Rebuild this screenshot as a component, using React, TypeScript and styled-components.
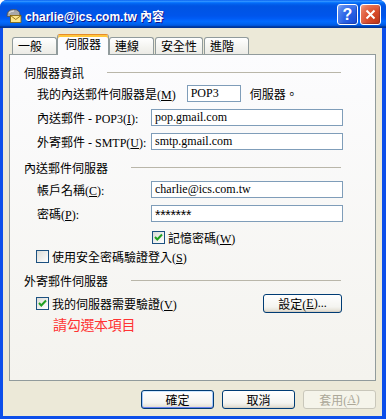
import React from 'react';
import styled, { createGlobalStyle } from 'styled-components';

const GlobalStyle = createGlobalStyle`
  html, body {
    margin: 0;
    padding: 0;
    background: #fff;
  }
  body {
    font-family: "Liberation Serif", "Noto Sans CJK TC", serif;
    font-size: 12px;
    color: #000;
  }
  * {
    box-sizing: border-box;
  }
`;

const Window = styled.div`
  width: 386px;
  height: 419px;
  display: flex;
  flex-direction: column;
  border-radius: 7px 7px 0 0;
  overflow: hidden;
  background: #0c4eea;
`;

const TitleBar = styled.div`
  height: 28px;
  flex: none;
  display: flex;
  align-items: center;
  padding: 1px 5px 0 6px;
  background: linear-gradient(
    to bottom,
    #0058ee 0%,
    #3593ff 4%,
    #288eff 6%,
    #127dff 8%,
    #036ffc 10%,
    #0262ee 14%,
    #0057e5 20%,
    #0054e3 24%,
    #0055eb 56%,
    #005bf5 66%,
    #026afe 76%,
    #0062ef 86%,
    #0052d6 92%,
    #0040ab 94%,
    #003092 100%
  );
`;

const TitleText = styled.div`
  flex: 1;
  margin-left: 3px;
  padding-top: 2px;
  font-family: "Liberation Sans", "Noto Sans CJK TC", sans-serif;
  font-weight: bold;
  font-size: 12px;
  color: #fff;
  text-shadow: 1px 1px #0f1089;
  white-space: nowrap;
`;

const CaptionButton = styled.div<{ $kind: 'help' | 'close' }>`
  width: 21px;
  height: 21px;
  margin-left: 2px;
  border: 1px solid #fff;
  border-radius: 3px;
  display: flex;
  align-items: center;
  justify-content: center;
  color: #fff;
  font-family: "Liberation Sans", sans-serif;
  font-weight: bold;
  font-size: 16px;
  background: ${(p) =>
    p.$kind === 'help'
      ? 'radial-gradient(circle at 85% 85%, #1b4fd8 0%, #2a62e6 45%, #5585ee 80%, #8fb0f4 100%)'
      : 'radial-gradient(circle at 85% 85%, #c23a1c 0%, #db4c2c 45%, #e8785a 80%, #f3a88f 100%)'};
  box-shadow: inset -1px -1px 1px rgba(0, 0, 60, 0.25);
`;

const Body = styled.div`
  flex: 1;
  margin: 0 4px 3px 3px;
  padding: 6px 6px 7px 6px;
  background: #ece9d8;
  display: flex;
  flex-direction: column;
`;

const TabStrip = styled.div`
  height: 21px;
  margin-bottom: -1px;
  padding-left: 3px;
  display: flex;
  align-items: flex-end;
  position: relative;
  z-index: 1;
`;

const Tab = styled.div<{ $active?: boolean }>`
  font-family: "Noto Sans CJK TC", sans-serif;
  font-size: 12px;
  line-height: 14px;
  display: flex;
  align-items: center;
  border: 1px solid #919b9c;
  border-bottom: none;
  border-radius: 3px 3px 0 0;
  white-space: nowrap;
  ${(p) =>
    p.$active
      ? `
    height: 21px;
    margin: 0 0 0 -1px;
    padding: 0 7px 2px 7px;
    background: #fcfcfe;
    border-top: 1px solid #e68b2c;
    box-shadow: inset 0 2px #ffc73c;
    position: relative;
  `
      : `
    height: 17px;
    min-width: 45px;
    margin: 0 1px 1px 0;
    padding: 0 5px;
    background: linear-gradient(#ffffff, #f3f3ef 60%, #ecebe6);
  `}
`;

const Panel = styled.div`
  flex: 1;
  border: 1px solid #919b9c;
  background: linear-gradient(#fcfcfe, #f4f3ee);
  padding: 10px 0 0 14px;
  display: flex;
  flex-direction: column;
`;

const GroupHeader = styled.div<{ $gap?: number }>`
  height: 14px;
  margin: ${(p) => p.$gap ?? 0}px 34px 0 0;
  display: flex;
  align-items: center;
  gap: 23px;
  font-family: "Noto Sans CJK TC", sans-serif;
  white-space: nowrap;
  &::after {
    content: '';
    flex: 1;
    border-top: 1px solid #b9b6a9;
  }
`;

const FieldRow = styled.div<{ $gap: number }>`
  height: 17px;
  margin-top: ${(p) => p.$gap}px;
  padding-left: 13px;
  display: flex;
  align-items: center;
  white-space: nowrap;
`;

const Label = styled.span<{ $width?: number }>`
  ${(p) => (p.$width ? `width: ${p.$width}px;` : '')}
  flex: none;
`;

const Mn = styled.span`
  text-decoration: underline;
`;

const Input = styled.div<{ $width: number; $secret?: boolean }>`
  width: ${(p) => p.$width}px;
  height: 17px;
  border: 1px solid #7f9db9;
  background: #fff;
  padding: 0 3px;
  display: flex;
  align-items: center;
  ${(p) =>
    p.$secret
      ? 'font-family: "Liberation Sans", sans-serif; font-size: 14px; letter-spacing: -0.3px; padding-top: 3px;'
      : ''}
`;

const Suffix = styled.span`
  margin-left: 9px;
  font-family: "Noto Sans CJK TC", sans-serif;
`;

const CheckRow = styled.div<{ $gap: number; $indent: number; $tall?: boolean }>`
  height: ${(p) => (p.$tall ? 19 : 13)}px;
  margin: ${(p) => p.$gap}px 33px 0 0;
  padding-left: ${(p) => p.$indent}px;
  display: flex;
  align-items: center;
  justify-content: space-between;
`;

const CheckLabel = styled.label`
  display: flex;
  align-items: center;
  gap: 3px;
  white-space: nowrap;
`;

const Box = styled.span`
  width: 13px;
  height: 13px;
  flex: none;
  border: 1px solid #1c5180;
  background: linear-gradient(135deg, #dcdcd7, #ffffff);
  display: flex;
  align-items: center;
  justify-content: center;
`;

const Hint = styled.div`
  margin-top: 3px;
  padding-left: 29px;
  font-family: "Noto Sans CJK TC", sans-serif;
  font-size: 14px;
  line-height: 16px;
  letter-spacing: -0.3px;
  color: #ff3333;
`;

const Button = styled.button<{ $width: number; $default?: boolean }>`
  width: ${(p) => p.$width}px;
  height: 19px;
  padding: 0;
  border: 1px solid #003c74;
  border-radius: 3px;
  background: linear-gradient(#ffffff, #f4f4f0 70%, #e6e3d9 90%, #d6d0c5);
  font-family: "Liberation Serif", "Noto Sans CJK TC", serif;
  font-size: 12px;
  color: #000;
  display: flex;
  align-items: center;
  justify-content: center;
  ${(p) =>
    p.$default
      ? 'box-shadow: inset 0 1px #cee7ff, inset 0 -1px #6982ee, inset 1px 0 #a2c6fb, inset -1px 0 #a2c6fb;'
      : 'box-shadow: inset 0 -1px #d6d0c5;'}
  &:disabled {
    border-color: #c9c7ba;
    background: #f5f4ea;
    color: #aca899;
    box-shadow: none;
  }
`;

const ButtonRow = styled.div`
  margin-top: 9px;
  display: flex;
  justify-content: flex-end;
  gap: 8px;
`;

const Check: React.FC<{ checked?: boolean }> = ({ checked }) => (
  <Box>
    {checked && (
      <svg width="9" height="9" viewBox="0 0 9 9">
        <path d="M1 4 L3.3 6.5 L8 1.5" fill="none" stroke="#21a121" strokeWidth="2" />
      </svg>
    )}
  </Box>
);

const MailIcon = () => (
  <svg width="16" height="16" viewBox="0 0 16 16">
    <path d="M1 9 Q1 2.5 7.5 2.5 Q14 2.5 14 8 L14 9.5 L1 9.5 Z" fill="#a9a9a9" stroke="#4e4e4e" strokeWidth="0.8" />
    <path d="M3 6 Q5 4 8 4" fill="none" stroke="#e8e8e8" strokeWidth="1" />
    <rect x="4.5" y="8.5" width="10.5" height="7" fill="#fde68a" stroke="#806000" strokeWidth="0.8" />
    <path d="M4.5 8.5 L9.75 12.5 L15 8.5" fill="none" stroke="#806000" strokeWidth="0.8" />
  </svg>
);

const App: React.FC = () => (
  <>
    <GlobalStyle />
    <Window>
      <TitleBar>
        <MailIcon />
        <TitleText>charlie@ics.com.tw 內容</TitleText>
        <CaptionButton $kind="help">?</CaptionButton>
        <CaptionButton $kind="close">
          <svg width="11" height="11" viewBox="0 0 11 11">
            <path d="M1.5 1.5 L9.5 9.5 M9.5 1.5 L1.5 9.5" stroke="#fff" strokeWidth="2" />
          </svg>
        </CaptionButton>
      </TitleBar>
      <Body>
        <TabStrip>
          <Tab>一般</Tab>
          <Tab $active>伺服器</Tab>
          <Tab>連線</Tab>
          <Tab>安全性</Tab>
          <Tab>進階</Tab>
        </TabStrip>
        <Panel>
          <GroupHeader>伺服器資訊</GroupHeader>
          <FieldRow $gap={6}>
            <Label>
              我的內送郵件伺服器是(<Mn>M</Mn>)
            </Label>
            <Input $width={54} style={{ marginLeft: 11 }}>POP3</Input>
            <Suffix>伺服器。</Suffix>
          </FieldRow>
          <FieldRow $gap={7}>
            <Label $width={114}>
              內送郵件 - POP3(<Mn>I</Mn>):
            </Label>
            <Input $width={192}>pop.gmail.com</Input>
          </FieldRow>
          <FieldRow $gap={7}>
            <Label $width={114}>
              外寄郵件 - SMTP(<Mn>U</Mn>):
            </Label>
            <Input $width={192}>smtp.gmail.com</Input>
          </FieldRow>

          <GroupHeader $gap={10}>內送郵件伺服器</GroupHeader>
          <FieldRow $gap={7}>
            <Label $width={114}>
              帳戶名稱(<Mn>C</Mn>):
            </Label>
            <Input $width={192}>charlie@ics.com.tw</Input>
          </FieldRow>
          <FieldRow $gap={7}>
            <Label $width={114}>
              密碼(<Mn>P</Mn>):
            </Label>
            <Input $width={192} $secret>*******</Input>
          </FieldRow>
          <CheckRow $gap={9} $indent={128}>
            <CheckLabel>
              <Check checked />
              <span>
                記憶密碼(<Mn>W</Mn>)
              </span>
            </CheckLabel>
          </CheckRow>
          <CheckRow $gap={6} $indent={12}>
            <CheckLabel>
              <Check />
              <span>
                使用安全密碼驗證登入(<Mn>S</Mn>)
              </span>
            </CheckLabel>
          </CheckRow>

          <GroupHeader $gap={10}>外寄郵件伺服器</GroupHeader>
          <CheckRow $gap={7} $indent={12} $tall>
            <CheckLabel>
              <Check checked />
              <span>
                我的伺服器需要驗證(<Mn>V</Mn>)
              </span>
            </CheckLabel>
            <Button $width={79}>
              設定(<Mn>E</Mn>)...
            </Button>
          </CheckRow>
          <Hint>請勾選本項目</Hint>
        </Panel>
        <ButtonRow>
          <Button $width={73} $default>
            確定
          </Button>
          <Button $width={73}>取消</Button>
          <Button $width={73} disabled>
            套用(<Mn>A</Mn>)
          </Button>
        </ButtonRow>
      </Body>
    </Window>
  </>
);

export default App;
